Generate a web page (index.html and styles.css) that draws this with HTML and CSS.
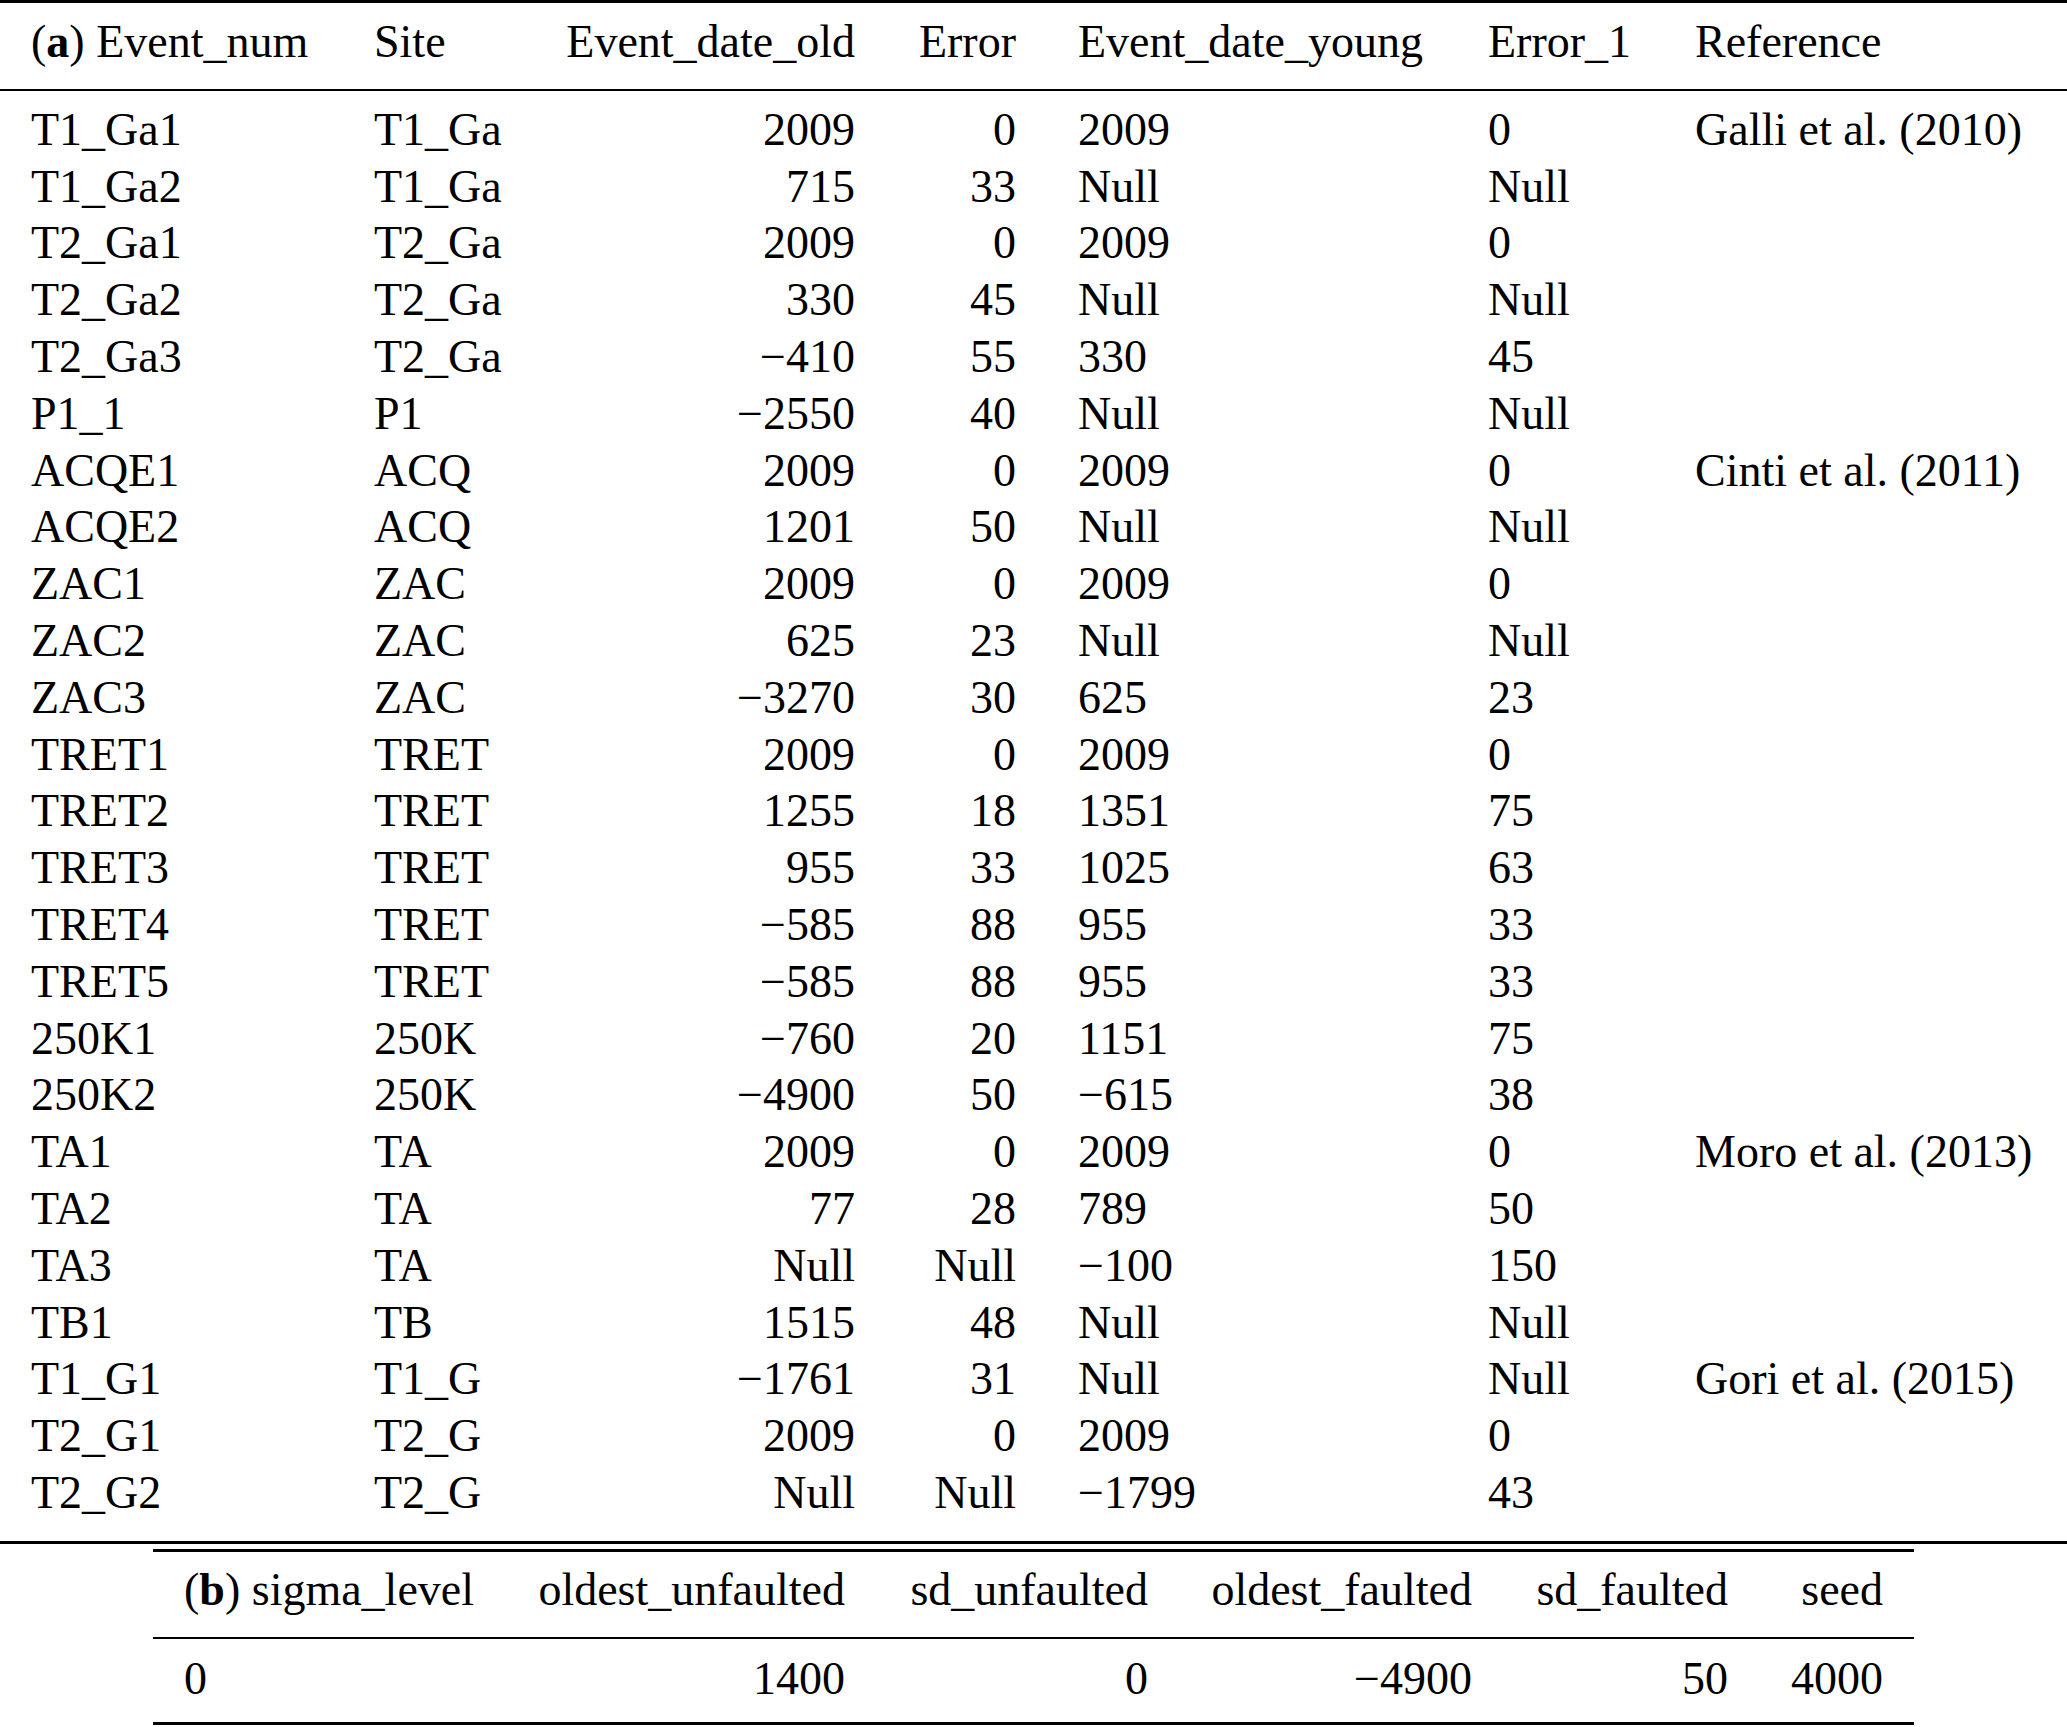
FILE: index.html
```html
<!DOCTYPE html>
<html lang="en">
<head>
<meta charset="utf-8">
<title>Event table</title>
<link rel="stylesheet" href="styles.css">
</head>
<body>
<table class="tbl tbl-a">
  <colgroup>
    <col class="a1"><col class="a2"><col class="a3"><col class="a4"><col class="a5"><col class="a6"><col class="a7">
  </colgroup>
  <thead>
    <tr>
      <th class="l">(<b>a</b>) Event_num</th>
      <th class="l">Site</th>
      <th class="r">Event_date_old</th>
      <th class="r">Error</th>
      <th class="l">Event_date_young</th>
      <th class="l">Error_1</th>
      <th class="l">Reference</th>
    </tr>
  </thead>
  <tbody>
    <tr><td>T1_Ga1</td><td>T1_Ga</td><td class="r">2009</td><td class="r">0</td><td>2009</td><td>0</td><td>Galli et al. (2010)</td></tr>
    <tr><td>T1_Ga2</td><td>T1_Ga</td><td class="r">715</td><td class="r">33</td><td>Null</td><td>Null</td><td></td></tr>
    <tr><td>T2_Ga1</td><td>T2_Ga</td><td class="r">2009</td><td class="r">0</td><td>2009</td><td>0</td><td></td></tr>
    <tr><td>T2_Ga2</td><td>T2_Ga</td><td class="r">330</td><td class="r">45</td><td>Null</td><td>Null</td><td></td></tr>
    <tr><td>T2_Ga3</td><td>T2_Ga</td><td class="r">−410</td><td class="r">55</td><td>330</td><td>45</td><td></td></tr>
    <tr><td>P1_1</td><td>P1</td><td class="r">−2550</td><td class="r">40</td><td>Null</td><td>Null</td><td></td></tr>
    <tr><td>ACQE1</td><td>ACQ</td><td class="r">2009</td><td class="r">0</td><td>2009</td><td>0</td><td>Cinti et al. (2011)</td></tr>
    <tr><td>ACQE2</td><td>ACQ</td><td class="r">1201</td><td class="r">50</td><td>Null</td><td>Null</td><td></td></tr>
    <tr><td>ZAC1</td><td>ZAC</td><td class="r">2009</td><td class="r">0</td><td>2009</td><td>0</td><td></td></tr>
    <tr><td>ZAC2</td><td>ZAC</td><td class="r">625</td><td class="r">23</td><td>Null</td><td>Null</td><td></td></tr>
    <tr><td>ZAC3</td><td>ZAC</td><td class="r">−3270</td><td class="r">30</td><td>625</td><td>23</td><td></td></tr>
    <tr><td>TRET1</td><td>TRET</td><td class="r">2009</td><td class="r">0</td><td>2009</td><td>0</td><td></td></tr>
    <tr><td>TRET2</td><td>TRET</td><td class="r">1255</td><td class="r">18</td><td>1351</td><td>75</td><td></td></tr>
    <tr><td>TRET3</td><td>TRET</td><td class="r">955</td><td class="r">33</td><td>1025</td><td>63</td><td></td></tr>
    <tr><td>TRET4</td><td>TRET</td><td class="r">−585</td><td class="r">88</td><td>955</td><td>33</td><td></td></tr>
    <tr><td>TRET5</td><td>TRET</td><td class="r">−585</td><td class="r">88</td><td>955</td><td>33</td><td></td></tr>
    <tr><td>250K1</td><td>250K</td><td class="r">−760</td><td class="r">20</td><td>1151</td><td>75</td><td></td></tr>
    <tr><td>250K2</td><td>250K</td><td class="r">−4900</td><td class="r">50</td><td>−615</td><td>38</td><td></td></tr>
    <tr><td>TA1</td><td>TA</td><td class="r">2009</td><td class="r">0</td><td>2009</td><td>0</td><td>Moro et al. (2013)</td></tr>
    <tr><td>TA2</td><td>TA</td><td class="r">77</td><td class="r">28</td><td>789</td><td>50</td><td></td></tr>
    <tr><td>TA3</td><td>TA</td><td class="r">Null</td><td class="r">Null</td><td>−100</td><td>150</td><td></td></tr>
    <tr><td>TB1</td><td>TB</td><td class="r">1515</td><td class="r">48</td><td>Null</td><td>Null</td><td></td></tr>
    <tr><td>T1_G1</td><td>T1_G</td><td class="r">−1761</td><td class="r">31</td><td>Null</td><td>Null</td><td>Gori et al. (2015)</td></tr>
    <tr><td>T2_G1</td><td>T2_G</td><td class="r">2009</td><td class="r">0</td><td>2009</td><td>0</td><td></td></tr>
    <tr><td>T2_G2</td><td>T2_G</td><td class="r">Null</td><td class="r">Null</td><td>−1799</td><td>43</td><td></td></tr>
  </tbody>
</table>

<table class="tbl tbl-b">
  <colgroup>
    <col class="b1"><col class="b2"><col class="b3"><col class="b4"><col class="b5"><col class="b6">
  </colgroup>
  <thead>
    <tr>
      <th class="l">(<b>b</b>) sigma_level</th>
      <th class="r">oldest_unfaulted</th>
      <th class="r">sd_unfaulted</th>
      <th class="r">oldest_faulted</th>
      <th class="r">sd_faulted</th>
      <th class="r">seed</th>
    </tr>
  </thead>
  <tbody>
    <tr><td>0</td><td class="r">1400</td><td class="r">0</td><td class="r">−4900</td><td class="r">50</td><td class="r">4000</td></tr>
  </tbody>
</table>
</body>
</html>
```

FILE: styles.css
```css
html, body {
  margin: 0;
  padding: 0;
  background: #ffffff;
}

body {
  font-family: "Liberation Serif", "Times New Roman", serif;
  font-size: 46px;
  color: #000000;
  width: 2067px;
}

.tbl {
  border-collapse: collapse;
  table-layout: fixed;
  border-top: 3px solid #000;
  border-bottom: 3px solid #000;
}

.tbl th,
.tbl td {
  font-weight: normal;
  line-height: 56.8px;
  padding: 0 31px;
  text-align: left;
  white-space: nowrap;
  vertical-align: baseline;
}

.tbl th b {
  font-weight: bold;
}

.tbl .r {
  text-align: right;
}

.tbl thead th {
  border-bottom: 2px solid #000;
}

/* table (a) */
.tbl-a {
  width: 2067px;
}

.tbl-a thead th {
  padding-top: 11px;
  padding-bottom: 18px;
}

.tbl-a tbody tr:first-child td {
  padding-top: 11px;
}

.tbl-a tbody tr:last-child td {
  padding-bottom: 19px;
}

.a1 { width: 343px; }
.a2 { width: 191px; }
.a3 { width: 352px; }
.a4 { width: 161px; }
.a5 { width: 410px; }
.a6 { width: 207px; }
.a7 { width: 403px; }

/* table (b) */
.tbl-b {
  width: 1761px;
  margin: 5px 0 0 153px;
}

.tbl-b thead th {
  padding-top: 10px;
  padding-bottom: 18px;
}

.tbl-b tbody td {
  padding-top: 12px;
  padding-bottom: 15px;
}

.b1 { width: 350px; }
.b2 { width: 373px; }
.b3 { width: 303px; }
.b4 { width: 324px; }
.b5 { width: 256px; }
.b6 { width: 155px; }
```
